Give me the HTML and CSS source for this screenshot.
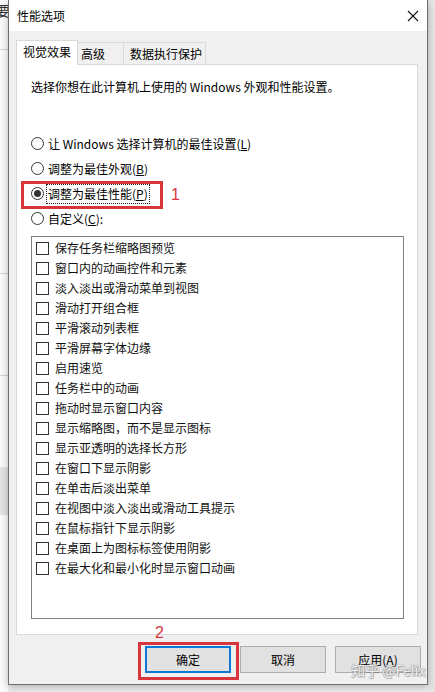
FILE: index.html
```html
<!DOCTYPE html>
<html lang="zh-CN">
<head>
<meta charset="utf-8">
<title>性能选项</title>
<link rel="stylesheet" href="styles.css">
</head>
<body>
<div class="screen">
  <div class="behind">
    <span class="frag">要</span>
    <div class="bline l1"></div>
    <div class="bline l2"></div>
    <div class="bline l3"></div>
    <div class="bband"></div>
  </div>
  <div class="dialog">
    <div class="titlebar">
      <span class="title">性能选项</span>
      <svg class="close" width="12" height="12" viewBox="0 0 12 12"><path d="M1 1 L11 11 M11 1 L1 11" stroke="#111" stroke-width="1.1" fill="none"/></svg>
    </div>
    <div class="body">
      <div class="tabs">
        <div class="tab active">视觉效果</div>
        <div class="tab t2">高级</div>
        <div class="tab t3">数据执行保护</div>
      </div>
      <div class="panel">
        <p class="desc">选择你想在此计算机上使用的 Windows 外观和性能设置。</p>
        <div class="radios">
          <div class="radio"><span class="circle"></span><span>让 Windows 选择计算机的最佳设置(<u>L</u>)</span></div>
          <div class="radio"><span class="circle"></span><span>调整为最佳外观(<u>B</u>)</span></div>
          <div class="radio"><span class="circle checked"></span><span class="focus">调整为最佳性能(<u>P</u>)</span></div>
          <div class="radio"><span class="circle"></span><span>自定义(<u>C</u>):</span></div>
        </div>
        <div class="list">
          <div class="item"><span class="box"></span>保存任务栏缩略图预览</div>
          <div class="item"><span class="box"></span>窗口内的动画控件和元素</div>
          <div class="item"><span class="box"></span>淡入淡出或滑动菜单到视图</div>
          <div class="item"><span class="box"></span>滑动打开组合框</div>
          <div class="item"><span class="box"></span>平滑滚动列表框</div>
          <div class="item"><span class="box"></span>平滑屏幕字体边缘</div>
          <div class="item"><span class="box"></span>启用速览</div>
          <div class="item"><span class="box"></span>任务栏中的动画</div>
          <div class="item"><span class="box"></span>拖动时显示窗口内容</div>
          <div class="item"><span class="box"></span>显示缩略图，而不是显示图标</div>
          <div class="item"><span class="box"></span>显示亚透明的选择长方形</div>
          <div class="item"><span class="box"></span>在窗口下显示阴影</div>
          <div class="item"><span class="box"></span>在单击后淡出菜单</div>
          <div class="item"><span class="box"></span>在视图中淡入淡出或滑动工具提示</div>
          <div class="item"><span class="box"></span>在鼠标指针下显示阴影</div>
          <div class="item"><span class="box"></span>在桌面上为图标标签使用阴影</div>
          <div class="item"><span class="box"></span>在最大化和最小化时显示窗口动画</div>
        </div>
      </div>
      <div class="buttons">
        <div class="btn default">确定</div>
        <div class="btn">取消</div>
        <div class="btn">应用(<u>A</u>)</div>
      </div>
    </div>
  </div>
  <div class="backdrop"></div>
  <div class="mark mark1"></div>
  <span class="num num1">1</span>
  <div class="mark mark2"></div>
  <span class="num num2">2</span>
  <div class="watermark">知乎 @Felix</div>
</div>
</body>
</html>
```
FILE: styles.css
```css
* { box-sizing: border-box; }
html, body { margin: 0; padding: 0; }
body {
  width: 435px;
  height: 692px;
  overflow: hidden;
  background: #efefef;
  font-family: "Noto Sans CJK SC", "Noto Sans", sans-serif;
  font-size: 12px;
  line-height: 16px;
  color: #000;
}
.screen {
  position: relative;
  display: flex;
  width: 435px;
  height: 692px;
}
.behind {
  position: relative;
  width: 8px;
  height: 692px;
  background: #fbfbfb;
  overflow: hidden;
}
.frag {
  position: absolute;
  left: -4px;
  top: 2px;
  font-size: 14px;
  color: #333;
}
.bline { position: absolute; left: 0; width: 8px; height: 1px; background: #d4d4d4; }
.l1 { top: 49px; }
.l2 { top: 273px; }
.l3 { top: 375px; }
.bband { position: absolute; left: 0; top: 467px; width: 8px; height: 48px; background: #e4e4e4; }

.dialog {
  position: relative;
  z-index: 2;
  width: 420px;
  height: 685px;
  border: 1px solid #6e6e6e;
  border-top: none;
  background: #f0f0f0;
  box-shadow: 0 2px 8px rgba(0,0,0,0.28);
  display: flex;
  flex-direction: column;
}
.titlebar {
  height: 31px;
  background: #fff;
  display: flex;
  align-items: center;
  justify-content: space-between;
  padding: 0 8px 0 8px;
}
.title { font-size: 12px; margin-top: 1px; }
.close { margin-right: 0; margin-top: 0; }

.body {
  flex: 1;
  padding: 9px 6px 10px 7px;
  display: flex;
  flex-direction: column;
}
.tabs {
  display: flex;
  align-items: flex-end;
  height: 24px;
}
.tab {
  height: 22px;
  border: 1px solid #d9d9d9;
  border-bottom: none;
  background: #f0f0f0;
  display: flex;
  align-items: center;
  padding-top: 1px;
}
.tab.active {
  position: relative;
  z-index: 1;
  height: 25px;
  margin-bottom: -1px;
  width: 62px;
  background: #fff;
  padding-left: 6px;
  padding-top: 0;
  padding-bottom: 2px;
}
.tab.t2 { width: 47px; padding-left: 4px; margin-left: -1px; border-left: none; }
.tab.t3 { width: 83px; padding-left: 6px; border-left: 1px solid #d9d9d9; margin-left: -1px; }

.panel {
  width: 402px;
  height: 571px;
  background: #fff;
  border: 1px solid #d9d9d9;
  padding: 14px 13px 15px 14px;
  display: flex;
  flex-direction: column;
}
.desc { margin: 0; height: 16px; }
.radios { margin-top: 36px; display: flex; flex-direction: column; }
.radio {
  height: 25px;
  display: flex;
  align-items: center;
  gap: 4px;
}
.circle {
  width: 13px;
  height: 13px;
  border: 1px solid #333;
  border-radius: 50%;
  background: #fff;
  display: flex;
  align-items: center;
  justify-content: center;
  flex: none;
}
.circle.checked::after {
  content: "";
  width: 7px;
  height: 7px;
  border-radius: 50%;
  background: #333;
}
.focus { outline: 1px dotted #222; outline-offset: 1px; }

.list {
  margin-top: 5px;
  height: 383px;
  border: 1px solid #828282;
  padding-top: 1px;
}
.item {
  height: 20px;
  display: flex;
  align-items: center;
  padding-left: 4px;
  gap: 6px;
  color: #111;
}
.box {
  width: 13px;
  height: 13px;
  border: 1px solid #333;
  background: #fff;
  flex: none;
}

.buttons {
  margin-top: 11px;
  display: flex;
  justify-content: flex-end;
  gap: 9px;
}
.btn {
  width: 86px;
  height: 27px;
  background: #e1e1e1;
  border: 1px solid #adadad;
  display: flex;
  align-items: center;
  justify-content: center;
}
.btn.default { border: 2px solid #0a78d4; }

.backdrop {
  flex: 1;
  background: #e6e6e6;
}

.mark {
  position: absolute;
  z-index: 5;
  border: 3px solid #d8363d;
}
.mark1 { left: 21px; top: 181px; width: 142px; height: 28px; }
.mark2 { left: 138px; top: 642px; width: 101px; height: 38px; }
.num {
  position: absolute;
  z-index: 5;
  color: #d8363d;
  font-family: "Liberation Sans", sans-serif;
  font-size: 16px;
  line-height: 16px;
}
.num1 { left: 171px; top: 187px; }
.num2 { left: 155px; top: 625px; }

.watermark {
  position: absolute;
  z-index: 6;
  left: 351px;
  top: 661px;
  font-size: 14px;
  line-height: 18px;
  color: rgba(255,255,255,0.9);
  text-shadow: 0 0 1px #8a8a8a, 0 0 1px #8a8a8a, 1px 1px 1px rgba(0,0,0,0.25);
}
```
